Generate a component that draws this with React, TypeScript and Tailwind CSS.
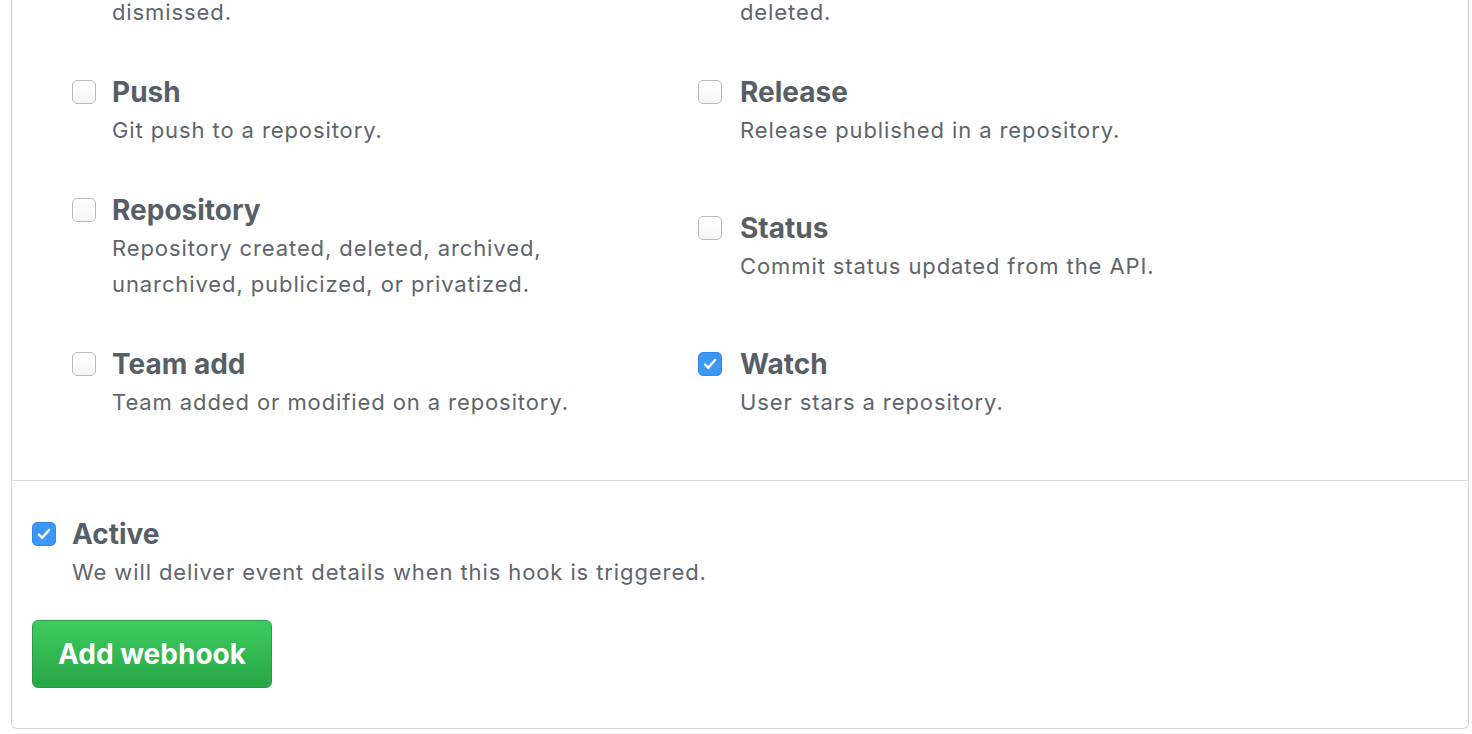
import React from "react";

type Choice = { title: string; desc: string[]; checked?: boolean };

const rows: [Choice, Choice][] = [
  [
    { title: "Push", desc: ["Git push to a repository."] },
    { title: "Release", desc: ["Release published in a repository."] },
  ],
  [
    { title: "Repository", desc: ["Repository created, deleted, archived,", "unarchived, publicized, or privatized."] },
    { title: "Status", desc: ["Commit status updated from the API."] },
  ],
  [
    { title: "Team add", desc: ["Team added or modified on a repository."] },
    { title: "Watch", desc: ["User stars a repository."], checked: true },
  ],
];

function Box({ checked }: { checked?: boolean }) {
  if (checked) {
    return (
      <div className="w-6 h-6 rounded-[5px] bg-[#3c97f6] border border-[#3188e8] flex items-center justify-center shrink-0">
        <svg width="18" height="18" viewBox="0 0 18 18" fill="none">
          <path d="M4 9.5l3.3 3.3L14 5" stroke="white" strokeWidth="2.4" strokeLinecap="round" strokeLinejoin="round" />
        </svg>
      </div>
    );
  }
  return (
    <div className="w-6 h-6 rounded-[5px] border border-[#b9b9b9] bg-gradient-to-b from-white to-[#f6f6f6] shadow-[inset_0_1px_0_#fff] shrink-0" />
  );
}

function Item({ c, wide }: { c: Choice; wide?: boolean }) {
  return (
    <div className="flex">
      <div className={`h-10 flex items-center shrink-0 ${wide ? "w-[42px]" : "w-10"}`}>
        <Box checked={c.checked} />
      </div>
      <div>
        <div className="text-[28px] leading-[40px] font-bold text-[#575e66]">{c.title}</div>
        {c.desc.map((d) => (
          <div key={d} className="text-[22px] leading-[36px] tracking-[0.9px] text-[#5e656d]">
            {d}
          </div>
        ))}
      </div>
    </div>
  );
}

export default function App() {
  return (
    <div className="h-[734px] overflow-hidden bg-white font-['Inter','Liberation_Sans',sans-serif]">
      <div className="ml-[11px] w-[1458px] border-x border-b border-[#d1d5da] rounded-b-[6px]">
        <div className="pl-[60px] pb-[60px] border-b border-[#dcdfe3] -mt-[6px]">
          <div className="grid grid-cols-[626px_1fr] gap-y-[42px] items-center">
            <div className="pl-10 text-[22px] leading-[36px] tracking-[0.9px] text-[#5e656d]">dismissed.</div>
            <div className="pl-[42px] text-[22px] leading-[36px] tracking-[0.9px] text-[#5e656d]">deleted.</div>
            {rows.map((r) => (
              <React.Fragment key={r[0].title}>
                <Item c={r[0]} />
                <Item c={r[1]} wide />
              </React.Fragment>
            ))}
          </div>
        </div>
        <div className="pl-5 pt-[33px] pb-[40px]">
          <Item c={{ title: "Active", desc: ["We will deliver event details when this hook is triggered."], checked: true }} />
          <button className="mt-[30px] h-[68px] px-[25px] rounded-[6px] border border-[#2a9a45] bg-gradient-to-b from-[#3dcc5f] to-[#28a745] text-white text-[28px] font-bold">
            Add webhook
          </button>
        </div>
      </div>
    </div>
  );
}
